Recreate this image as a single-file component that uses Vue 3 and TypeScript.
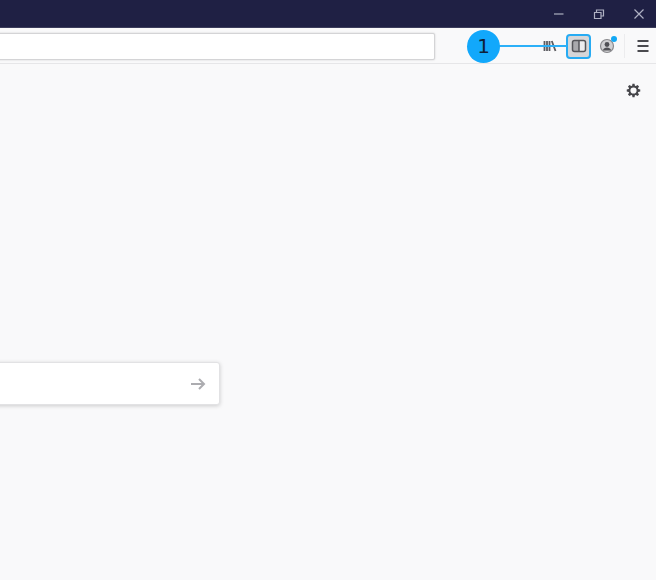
<script setup lang="ts">
const badge: string = '1'
</script>

<template>
  <div class="window">
    <header class="titlebar">
      <svg class="win" width="12" height="12" viewBox="0 0 12 12"><path d="M1 6h9.500" /></svg>
      <svg class="win" width="12" height="12" viewBox="0 0 12 12"><path d="M1.500 4.500h6.500v6h-6.500zM3.500 4.500v-2.500h7v6h-2.500" /></svg>
      <svg class="win" width="12" height="12" viewBox="0 0 12 12"><path d="M1.500 1.500l9 9M10.500 1.500l-9 9" /></svg>
    </header>
    <nav class="toolbar">
      <div class="urlbar"></div>
      <div class="tools">
        <svg class="lib" width="16" height="16" viewBox="0 0 16 16"><path d="M2.500 3v10M5 3v10M7.500 3v10M9.800 3l3.700 10" /></svg>
        <div class="sidebar-btn">
          <svg width="16" height="16" viewBox="0 0 16 16"><rect x="8" y="3" width="6" height="10" class="fill-right" /><rect x="2" y="3" width="6" height="10" class="fill" /><rect x="1.500" y="2.500" width="13" height="11" rx="2" /><path d="M8 2.500v11" /></svg>
        </div>
        <div class="account">
          <svg width="16" height="16" viewBox="0 0 16 16"><circle cx="8" cy="8" r="6.500" /><circle cx="8" cy="6.500" r="2.400" class="solid" /><path d="M3.800 12.500c.8-2.300 2.400-3 4.200-3s3.400.7 4.200 3" class="solid" /></svg>
          <span class="dot"></span>
        </div>
        <span class="sep"></span>
        <svg class="menu" width="16" height="16" viewBox="0 0 16 16"><path d="M2.500 3h11M2.500 8h11M2.500 13h11" /></svg>
      </div>
      <div class="callout">
        <span class="line"></span>
        <span class="num">{{ badge }}</span>
      </div>
    </nav>
    <main class="content">
      <div class="gear-row">
        <svg width="16" height="16" viewBox="0 0 16 16"><path fill-rule="evenodd" d="M6.900.8h2.200l.4 2.100 1 .4 1.800-1.200 1.600 1.600-1.200 1.800.4 1 2.100.4v2.200l-2.100.4-.4 1 1.200 1.800-1.600 1.600-1.800-1.200-1 .4-.4 2.100H6.900l-.4-2.100-1-.4-1.800 1.200-1.600-1.600 1.200-1.800-.4-1-2.100-.4V6.900l2.100-.4.4-1 -1.200-1.800 1.600-1.600 1.800 1.200 1-.4zM8 4.700a3.300 3.300 0 1 0 0 6.600 3.300 3.300 0 0 0 0-6.600z" /></svg>
      </div>
      <div class="search">
        <svg width="16" height="16" viewBox="0 0 16 16"><path d="M1 8h13M9 3l5 5-5 5" /></svg>
      </div>
    </main>
  </div>
</template>

<style>
html, body { margin: 0; background: #f9f9fa; }
</style>

<style scoped>
.window {
  width: 656px;
  height: 580px;
  display: flex;
  flex-direction: column;
  overflow: hidden;
  background: #f9f9fa;
  font-family: "Liberation Sans", Arial, sans-serif;
}
.titlebar {
  height: 28px;
  flex: none;
  box-sizing: border-box;
  background: #1f2044;
  border-bottom: 1px solid #3c3d5c;
  display: flex;
  align-items: center;
  justify-content: flex-end;
  gap: 28px;
  padding-right: 11px;
}
.win { fill: none; stroke: #aeb0c2; stroke-width: 1.200; filter: blur(0.4px); }
.toolbar {
  height: 36px;
  flex: none;
  box-sizing: border-box;
  position: relative;
  background: #f9f9fa;
  border-bottom: 1px solid #e6e6e8;
  display: flex;
  align-items: center;
  justify-content: space-between;
}
.urlbar {
  width: 445px;
  height: 27px;
  margin: 1px 0 0 -10px;
  box-sizing: border-box;
  background: #fff;
  border: 1px solid #d4d4d6;
  border-radius: 2px;
  box-shadow: 0 0 2px rgba(0, 0, 0, 0.18);
}
.tools {
  display: flex;
  align-items: center;
  height: 100%;
  padding-right: 5px;
}
.lib { fill: none; stroke: #5c5c61; stroke-width: 1.800; margin-right: 8px; filter: blur(0.5px); }
.sidebar-btn {
  width: 25px;
  height: 25px;
  margin-top: 1px;
  box-sizing: border-box;
  border: 2px solid #27abf3;
  border-radius: 4px;
  background: #d6d6d8;
  display: flex;
  align-items: center;
  justify-content: center;
}
.sidebar-btn svg { fill: none; stroke: #55555a; stroke-width: 1.500; filter: blur(0.4px); }
.sidebar-btn .fill { fill: #a9a9ad; stroke: none; }
.sidebar-btn .fill-right { fill: #ececee; stroke: none; }
.account {
  position: relative;
  width: 16px;
  height: 16px;
  margin-left: 8px;
}
.account svg { fill: #d0d0d3; stroke: #8a8a8e; stroke-width: 1.200; display: block; filter: blur(0.5px); }
.account .solid { fill: #505055; stroke: none; }
.dot {
  position: absolute;
  top: -2px;
  right: -2px;
  width: 6px;
  height: 6px;
  border-radius: 50%;
  background: #12a8f5;
}
.sep {
  width: 1px;
  height: 24px;
  background: #ececee;
  margin: 0 10px 0 9px;
}
.menu { fill: none; stroke: #4a4a4f; stroke-width: 1.800; filter: blur(0.4px); }
.callout {
  position: absolute;
  left: 467px;
  top: 0;
  height: 100%;
  width: 100px;
  display: flex;
  align-items: center;
}
.num {
  position: relative;
  width: 33px;
  height: 33px;
  margin-top: 1px;
  border-radius: 50%;
  background: #12a8fb;
  color: #0e2038;
  font-size: 20px;
  line-height: 33px;
  text-align: center;
  font-family: "DejaVu Sans", sans-serif;
}
.line {
  position: absolute;
  left: 30px;
  top: 17px;
  width: 70px;
  height: 2px;
  background: #2cb0f8;
}
.content {
  flex: 1;
  display: flex;
  flex-direction: column;
  background: #f9f9fa;
}
.gear-row {
  display: flex;
  justify-content: flex-end;
  padding: 19px 15px 0 0;
}
.gear-row svg { fill: #46464a; width: 15px; height: 15px; filter: blur(0.4px); }
.search {
  width: 230px;
  height: 43px;
  margin: 264px 0 0 -10px;
  box-sizing: border-box;
  background: #fff;
  border: 1px solid #e2e2e4;
  border-radius: 3px;
  box-shadow: 0 1px 4px rgba(0, 0, 0, 0.18);
  display: flex;
  align-items: center;
  justify-content: flex-end;
  padding-right: 13px;
}
.search svg { fill: none; stroke: #acacb0; stroke-width: 2; filter: blur(0.4px); }
</style>
